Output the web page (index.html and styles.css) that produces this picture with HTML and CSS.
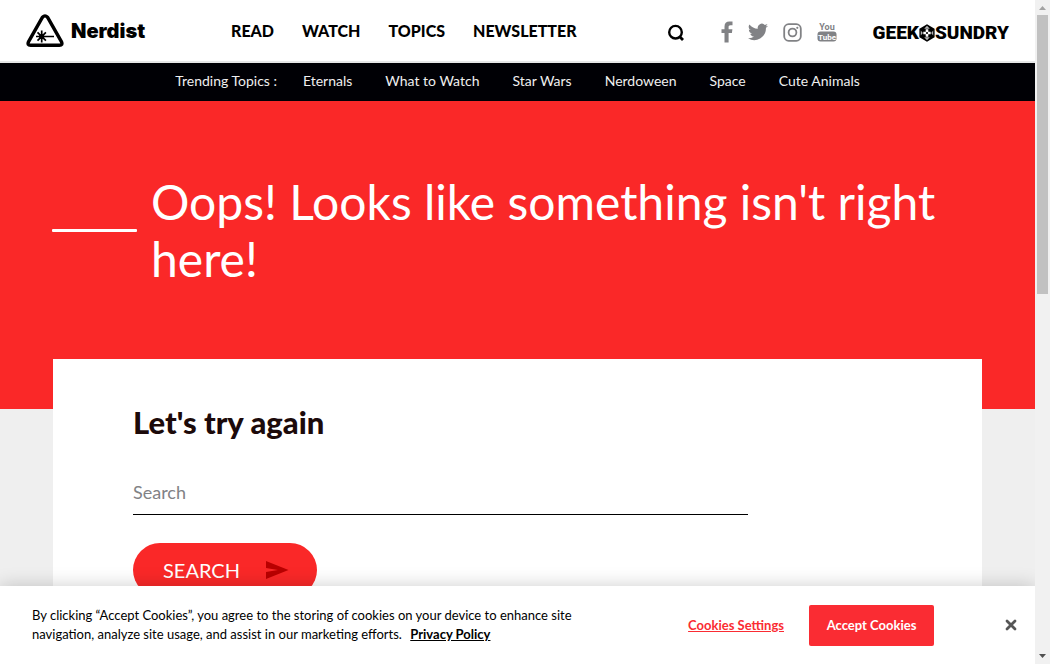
FILE: index.html
```
<!DOCTYPE html>
<html lang="en">
<head>
    <meta charset="UTF-8">
    <meta name="viewport" content="width=device-width, initial-scale=1.0">
    <title>Page not found - Nerdist</title>
    <link rel="stylesheet" href="styles.css">
</head>
<body>
    <div class="page">
        <header class="header">
            <a class="logo" href="#" aria-label="Nerdist">
                <svg width="38" height="34" viewBox="0 0 38 34" aria-hidden="true">
                    <path d="M16.5 3.2 2.6 27.6Q.9 31.2 4.6 31.2H33.4Q37.1 31.2 35.4 27.6L21.5 3.2Q19 .6 16.5 3.2Z" fill="none" stroke="#000" stroke-width="3.4" stroke-linejoin="round"/>
                    <path d="M10 22.5H28M15.7 16.5V28.5M11.5 18.3 19.9 26.7M19.9 18.3 11.5 26.7" fill="none" stroke="#000" stroke-width="1.7"/>
                    <circle cx="15.7" cy="22.5" r="2.6"/>
                </svg>
                <span>Nerdist</span>
            </a>
            <nav class="main-nav">
                <a href="#">READ</a>
                <a href="#">WATCH</a>
                <a href="#">TOPICS</a>
                <a href="#">NEWSLETTER</a>
            </nav>
            <button class="search-toggle" type="button" aria-label="Search">
                <svg width="18" height="18" viewBox="0 0 18 18">
                    <circle cx="8.5" cy="8.2" r="6.3" fill="none" stroke="#000" stroke-width="2.4"/>
                    <path d="M12.5 12.5 16 16" stroke="#000" stroke-width="2.8"/>
                </svg>
            </button>
            <div class="social">
                <a href="#" aria-label="Facebook">
                    <svg width="12" height="22" viewBox="0 0 12 22"><path d="M3.5 21.5V12H.5V8.3H3.5V5.5C3.5 2.3 5.3.5 8.3.5H11.5V4.2H9.5C8 4.2 7.6 4.9 7.6 6V8.3H11.4L10.9 12H7.6V21.5Z"/></svg>
                </a>
                <a href="#" aria-label="Twitter">
                    <svg width="20" height="18" viewBox="0 0 24 20"><path d="M24 2.4a10 10 0 0 1-2.8.8A5 5 0 0 0 23.3.5a10 10 0 0 1-3.1 1.2A4.9 4.9 0 0 0 11.8 6.2 14 14 0 0 1 1.7 1a4.9 4.9 0 0 0 1.5 6.6 4.9 4.9 0 0 1-2.2-.6c0 2.4 1.7 4.4 3.9 4.9a5 5 0 0 1-2.2.1 4.9 4.9 0 0 0 4.6 3.4A9.9 9.9 0 0 1 0 17.5 14 14 0 0 0 21.5 5a10 10 0 0 0 2.5-2.6Z"/></svg>
                </a>
                <a href="#" aria-label="Instagram">
                    <svg width="19" height="19" viewBox="0 0 19 19">
                        <rect x="1.2" y="1.2" width="16.6" height="16.6" rx="4.5" fill="none" stroke="#818285" stroke-width="1.8"/>
                        <circle cx="9.5" cy="9.5" r="3.9" fill="none" stroke="#818285" stroke-width="1.8"/>
                        <circle cx="14.3" cy="4.8" r="1.1"/>
                    </svg>
                </a>
                <a href="#" aria-label="YouTube">
                    <svg width="20" height="20" viewBox="0 0 20 20">
                        <text x="10" y="8" text-anchor="middle">You</text>
                        <rect x="0.5" y="9.5" width="19" height="10" rx="3"/>
                        <text class="tube" x="10" y="18" text-anchor="middle">Tube</text>
                    </svg>
                </a>
            </div>
            <a class="partner" href="#" aria-label="Geek and Sundry">
                <span>GEEK</span>
                <svg width="16" height="18" viewBox="0 0 16 18" aria-hidden="true">
                    <path d="M8 .3 15.6 4.7V13.3L8 17.7.4 13.3V4.7Z"/>
                    <path d="M8 1.8 5.2 4.8H10.8ZM8 16.2 5.2 13.2H10.8ZM1.8 6.5 3.8 9 1.8 11.5ZM14.2 6.5 12.200 9 14.2 11.5Z" fill="#fff" opacity=".7"/>
                    <path d="M8 5.3V12.7M4.3 9H11.7" stroke="#fff" stroke-width="2.6"/>
                    <circle cx="8" cy="9" r="1.1"/>
                </svg>
                <span>SUNDRY</span>
            </a>
        </header>

        <nav class="trending">
            <span>Trending Topics :</span>
            <a href="#">Eternals</a>
            <a href="#">What to Watch</a>
            <a href="#">Star Wars</a>
            <a href="#">Nerdoween</a>
            <a href="#">Space</a>
            <a href="#">Cute Animals</a>
        </nav>

        <main>
            <section class="hero">
                <span class="hero-line"></span>
                <h1>Oops! Looks like something isn't right here!</h1>
            </section>
            <section class="card">
                <h2>Let's try again</h2>
                <form>
                    <input type="text" placeholder="Search" aria-label="Search">
                    <button class="submit" type="button">
                        SEARCH
                        <svg width="23" height="20" viewBox="0 0 23 20" aria-hidden="true"><path d="M0 1 22.5 10 0 19V12L12 10 0 8Z" fill="#b90000"/></svg>
                    </button>
                </form>
            </section>
        </main>

        <div class="cookies" role="dialog" aria-label="Cookies">
            <p>By clicking “Accept Cookies”, you agree to the storing of cookies on your device to enhance site navigation, analyze site usage, and assist in our marketing efforts. <a href="#">Privacy Policy</a></p>
            <button class="settings" type="button">Cookies Settings</button>
            <button class="accept" type="button">Accept Cookies</button>
            <button class="close" type="button" aria-label="Close">
                <svg width="12" height="12" viewBox="0 0 12 12"><path d="M2 2 10 10M10 2 2 10" stroke="#565656" stroke-width="2.8" stroke-linecap="round"/></svg>
            </button>
        </div>
    </div>

    <div class="scrollbar" aria-hidden="true">
        <svg width="15" height="15" viewBox="0 0 15 15"><path d="M4 10 7.5 6 11 10Z" fill="#a3a3a3"/></svg>
        <span class="thumb"></span>
        <svg width="15" height="15" viewBox="0 0 15 15"><path d="M4 5H11L7.5 9Z" fill="#505050"/></svg>
    </div>
</body>
</html>
```
FILE: styles.css
```
* {
    box-sizing: border-box;
}
body {
    display: flex;
    height: 100vh;
    margin: 0;
    overflow: hidden;
    font-family: Lato, "Liberation Sans", sans-serif;
    background: #efefef;
    color: #000;
}
a {
    color: inherit;
    text-decoration: none;
}
button {
    padding: 0;
    border: none;
    background: none;
    font-family: inherit;
    cursor: pointer;
}
svg {
    display: block;
    flex: none;
}
.page {
    position: relative;
    flex: 1;
    min-width: 0;
    overflow: hidden;
}

/* header */
.header {
    display: flex;
    align-items: center;
    height: 63px;
    padding: 0 26px;
    background: #fff;
    border-bottom: 2px solid #e6e7e8;
}
.logo {
    display: flex;
    align-items: center;
    gap: 7px;
    width: 205px;
    font: 900 20px/24px Inter, sans-serif;
}
.main-nav {
    display: flex;
    gap: 28px;
    font-size: 16px;
    font-weight: 900;
}
.search-toggle {
    margin-left: auto;
    margin-top: 4px;
}
.social {
    display: flex;
    align-items: center;
    gap: 15px;
    margin: 3px 36px 0 36px;
    fill: #818285;
}
.social text {
    font: 700 9px Roboto, sans-serif;
}
.social .tube {
    font-size: 8px;
    fill: #fff;
}
.partner {
    display: flex;
    align-items: center;
    padding-top: 4px;
    font: 900 19px/24px Roboto, sans-serif;
}

/* trending bar */
.trending {
    display: flex;
    justify-content: center;
    gap: 33px;
    height: 38px;
    background: #000005;
    color: #efefef;
    font-size: 14px;
    line-height: 36px;
}
.trending span {
    margin-right: -7px;
}

/* error message */
.hero {
    display: flex;
    align-items: center;
    gap: 14px;
    padding: 72px 53px 122px 52px;
    background: #fa2828;
    color: #fff;
}
.hero-line {
    flex: none;
    width: 85px;
    height: 3px;
    border-radius: 1px;
    background: #fff;
}
h1 {
    margin: 0;
    font-size: 48px;
    font-weight: 400;
    line-height: 57px;
}
.card {
    position: relative;
    margin: -50px 53px 0;
    padding: 44px 80px 80px;
    background: #fff;
}
h2 {
    margin: 0 0 32px;
    color: #1c0a0a;
    font-size: 31px;
    font-weight: 900;
    line-height: 38px;
}
.card input {
    display: block;
    width: 80%;
    height: 42px;
    margin-bottom: 28px;
    padding: 0 0 4px;
    border: none;
    border-bottom: 1px solid #000;
    border-radius: 0;
    outline: none;
    font: 18px Lato, sans-serif;
}
.card input::placeholder {
    color: #818285;
}
.submit {
    display: flex;
    align-items: center;
    gap: 26px;
    height: 54px;
    padding: 0 28px 0 30px;
    border-radius: 27px;
    background: #fa2828;
    color: #fff;
    font-size: 20px;
}

/* cookie banner */
.cookies {
    position: absolute;
    right: 0;
    bottom: 0;
    left: 0;
    display: flex;
    align-items: center;
    height: 78px;
    padding: 0 18px 0 32px;
    background: #fff;
    box-shadow: 0 0 18px rgba(0, 0, 0, 0.2);
    font-size: 13px;
}
.cookies p {
    flex: 0 1 570px;
    margin: 0 auto 0 0;
    line-height: 19px;
}
.cookies p a {
    margin-left: 5px;
    font-weight: 700;
    text-decoration: underline;
}
.cookies button {
    font-size: 13px;
    font-weight: 700;
}
.cookies .settings {
    color: #fa2c33;
    text-decoration: underline;
}
.cookies .accept {
    width: 125px;
    height: 41px;
    margin: 0 71px 0 25px;
    border-radius: 2px;
    background: #fa2c33;
    color: #fff;
}

/* scrollbar */
.scrollbar {
    display: flex;
    flex-direction: column;
    width: 15px;
    background: #f1f1f1;
}
.thumb {
    flex: 0 0 42%;
    margin: 0 2px auto;
    background: #c1c1c1;
}
```
